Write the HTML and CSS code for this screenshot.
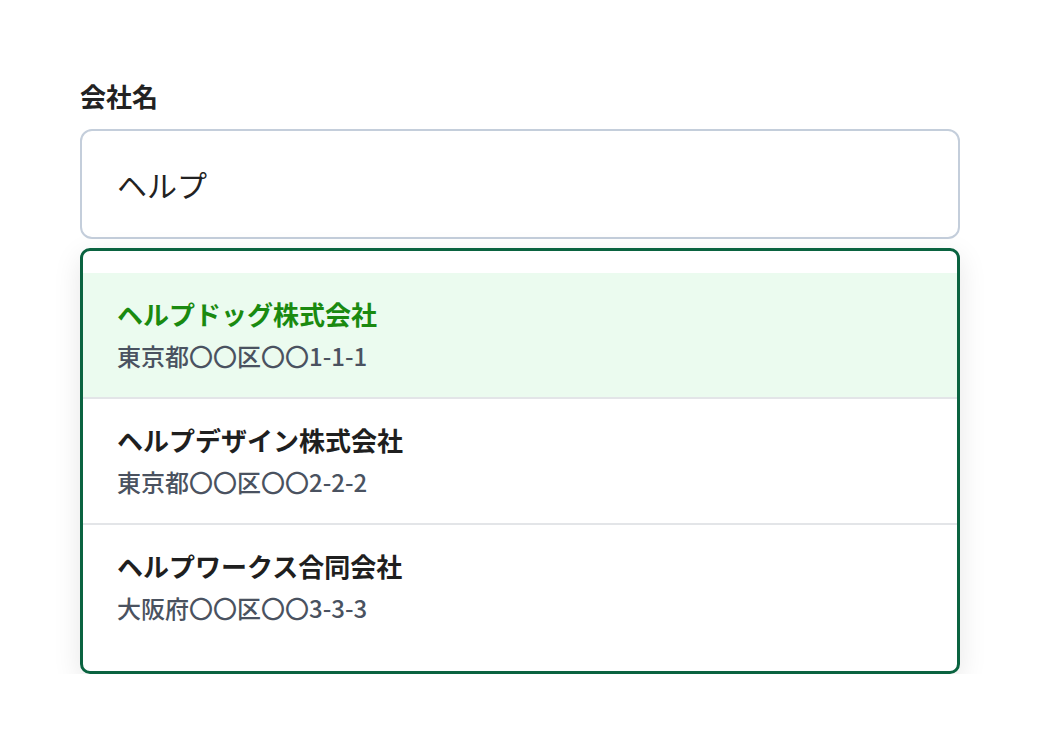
FILE: index.html
```html
<!DOCTYPE html>
<html lang="ja">
<head>
<meta charset="utf-8">
<title>会社名</title>
<link rel="stylesheet" href="styles.css">
</head>
<body>
<div class="field">
  <label class="field-label" for="company">会社名</label>
  <div class="input-box" id="company">ヘルプ</div>
  <ul class="dropdown">
    <li class="option active">
      <div class="option-name">ヘルプドッグ株式会社</div>
      <div class="option-addr">東京都〇〇区〇〇1-1-1</div>
    </li>
    <li class="option">
      <div class="option-name">ヘルプデザイン株式会社</div>
      <div class="option-addr">東京都〇〇区〇〇2-2-2</div>
    </li>
    <li class="option">
      <div class="option-name">ヘルプワークス合同会社</div>
      <div class="option-addr">大阪府〇〇区〇〇3-3-3</div>
    </li>
  </ul>
</div>
</body>
</html>
```

FILE: styles.css
```css
html, body {
  margin: 0;
  padding: 0;
  background: #ffffff;
}
body {
  font-family: "Noto Sans CJK JP", "Noto Sans", sans-serif;
  color: #222222;
}
.field {
  width: 880px;
  margin: 80px 0 0 80px;
  display: flex;
  flex-direction: column;
}
.field-label {
  font-size: 26px;
  font-weight: 700;
  line-height: 32px;
  margin-bottom: 17px;
  color: #222222;
}
.input-box {
  box-sizing: border-box;
  height: 110px;
  border: 2px solid #c4cedb;
  border-radius: 12px;
  padding: 0 35px;
  display: flex;
  align-items: center;
  font-size: 30px;
  font-weight: 400;
  color: #222222;
}
.dropdown {
  list-style: none;
  margin: 9px 0 0;
  padding: 22px 0;
  border: 3px solid #0a6340;
  border-radius: 10px;
  box-shadow: 0 8px 28px rgba(0, 0, 0, 0.1);
  background: #ffffff;
}
.option {
  padding: 22px 34px 23px;
  border-bottom: 2px solid #e3e5e8;
}
.option:last-child {
  border-bottom: none;
}
.option.active {
  background: #ebfbef;
}
.option-name {
  font-size: 26px;
  font-weight: 700;
  line-height: 38px;
  color: #1f1f1f;
}
.option.active .option-name {
  color: #1a8a10;
}
.option-addr {
  margin-top: 5px;
  font-size: 24px;
  font-weight: 500;
  line-height: 36px;
  color: #4a5260;
}
```
